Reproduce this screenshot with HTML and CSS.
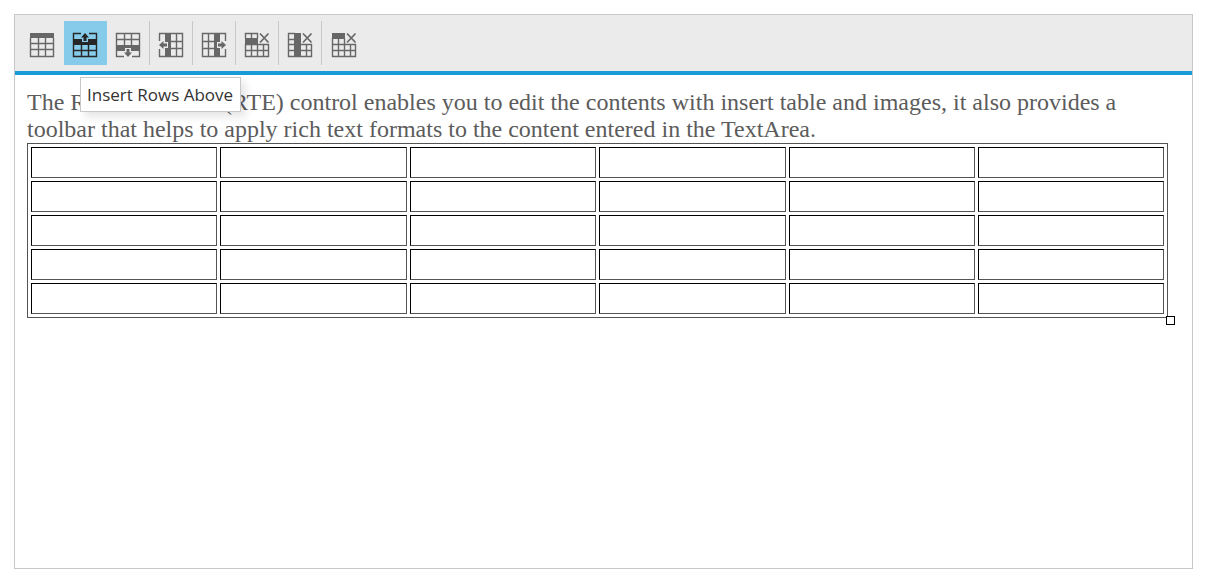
FILE: index.html
```html
<!DOCTYPE html>
<html lang="en">
<head>
<meta charset="utf-8">
<title>Rich Text Editor</title>
<link rel="stylesheet" href="styles.css">
</head>
<body>
<main class="editor">
  <div class="toolbar" role="toolbar" aria-label="Table tools">
    <button class="tool" type="button" aria-label="Table header">
      <svg class="icon" viewBox="0 0 24 24"><path class="fill" d="M0 0H24V5H0Z"/><path class="line" d="M.5 5V23.500H23.500V5M8.500 5V23M15.500 5V23M0 10.500H24M0 16.500H24"/></svg>
    </button>
    <button class="tool active" type="button" aria-label="Insert rows above" aria-describedby="tip">
      <svg class="icon" viewBox="0 0 24 24"><path class="line" d="M8 .5H.5V23.500H23.500V.5H16M8.500 11V23M15.500 11V23M0 17.500H24"/><path class="fill" d="M0 6H9V9H15V6H24V12H0ZM12 0L16 4.500H13.500V8H10.500V4.500H8Z"/></svg>
      <span class="tooltip" id="tip" role="tooltip">Insert Rows Above</span>
    </button>
    <button class="tool divided" type="button" aria-label="Insert rows below">
      <svg class="icon" viewBox="0 0 24 24"><path class="line" d="M8 23.500H.5V.5H23.500V23.500H16M8.500 0V13M15.500 0V13M0 6.500H24"/><path class="fill" d="M0 12H24V18H15V15H9V18H0ZM12 24L16 19.500H13.500V16H10.500V19.500H8Z"/></svg>
    </button>
    <button class="tool divided" type="button" aria-label="Insert columns left">
      <svg class="icon" viewBox="0 0 24 24"><path class="line" d="M.5 8V.5H23.500V23.500H.5V16M17.500 0V24M12 8.500H24M12 15.500H24"/><path class="fill" d="M6 0H12V24H6V15H9V9H6ZM0 12L4.500 8V10.500H8V13.500H4.500V16Z"/></svg>
    </button>
    <button class="tool divided" type="button" aria-label="Insert columns right">
      <svg class="icon" viewBox="0 0 24 24"><path class="line" d="M23.500 8V.5H.5V23.500H23.500V16M6.500 0V24M0 8.500H13M0 15.500H13"/><path class="fill" d="M12 0H18V9H15V15H18V24H12ZM24 12L19.500 8V10.500H16V13.500H19.500V16Z"/></svg>
    </button>
    <button class="tool divided" type="button" aria-label="Delete row">
      <svg class="icon" viewBox="0 0 24 24"><path class="fill" d="M0 5H13V12H0Z"/><path class="line" d="M.5 5V.5H12.500V5M6.500 0V5M.5 11.500H23.500V23.500H.5ZM6.500 11V24M12.500 11V24M18.500 11V24M0 17.500H24"/><path class="cross" d="M15 .5L23.500 9.500M23.500 .5L15 9.500"/></svg>
    </button>
    <button class="tool divided" type="button" aria-label="Delete column">
      <svg class="icon" viewBox="0 0 24 24"><path class="fill" d="M6 0H13V24H6Z"/><path class="line" d="M7 .5H.5V23.500H23.500V11.500H13M0 6.500H7M0 11.500H7M0 17.500H24M18.500 11V24"/><path class="cross" d="M15 .5L23.500 9.500M23.500 .5L15 9.500"/></svg>
    </button>
    <button class="tool" type="button" aria-label="Delete table">
      <svg class="icon" viewBox="0 0 24 24"><path class="fill" d="M0 0H13V6H0Z"/><path class="line" d="M.5 5V23.500H23.500V11.500H0M6.500 5V24M12.500 5V24M18.500 11V24M0 17.500H24"/><path class="cross" d="M15 .5L23.500 9.500M23.500 .5L15 9.500"/></svg>
    </button>
  </div>
  <div class="content">
    <p class="text">The RichTextEditor (RTE) control enables you to edit the contents with insert table and images, it also provides a toolbar that helps to apply rich text formats to the content entered in the TextArea.</p>
    <div class="table-wrap">
      <table class="grid">
        <tbody>
          <tr><td></td><td></td><td></td><td></td><td></td><td></td></tr>
          <tr><td></td><td></td><td></td><td></td><td></td><td></td></tr>
          <tr><td></td><td></td><td></td><td></td><td></td><td></td></tr>
          <tr><td></td><td></td><td></td><td></td><td></td><td></td></tr>
          <tr><td></td><td></td><td></td><td></td><td></td><td></td></tr>
        </tbody>
      </table>
      <span class="resize-handle"></span>
    </div>
  </div>
</main>
</body>
</html>
```
FILE: styles.css
```css
* {
  box-sizing: border-box;
}

body {
  margin: 0;
  padding: 14px 21px 13px 14px;
  background: #fff;
}

.editor {
  min-height: calc(100vh - 27px);
  border: 1px solid #c8c8c8;
}

.toolbar {
  display: flex;
  padding: 6px;
  background: #ebebeb;
  border-bottom: 4px solid #1a9ad7;
}

.tool {
  position: relative;
  display: flex;
  align-items: center;
  justify-content: center;
  width: 43px;
  height: 44px;
  padding: 3px 0 0;
  border: 0;
  border-right: 1px solid transparent;
  background: none;
  color: #676767;
}

.tool:last-child {
  width: 44px;
  border-right: 0;
}

.divided {
  border-right-color: #c8c8c8;
}

.active {
  border-right-color: #86cbea;
  background: #86cbea;
  color: #262626;
}

.icon {
  width: 24px;
  height: 24px;
  overflow: visible;
}

.fill {
  fill: currentColor;
}

.line {
  fill: none;
  stroke: currentColor;
  stroke-width: 1.4;
}

.cross {
  fill: none;
  stroke: currentColor;
  stroke-width: 1.7;
}

.tooltip {
  position: absolute;
  top: 56px;
  left: 16px;
  z-index: 1;
  padding: 4px 7px 4px 6px;
  border: 1px solid #c8c8c8;
  background: #fff;
  box-shadow: 5px 5px 8px rgba(0, 0, 0, 0.1);
  color: #333;
  font: 17px/25px "Open Sans", "Noto Sans", sans-serif;
  white-space: nowrap;
}

.content {
  padding: 14px 12px;
}

.text {
  margin: 0;
  color: #5c5c5c;
  font: 24px/27px "Liberation Serif", "Times New Roman", serif;
}

.table-wrap {
  position: relative;
  width: 99%;
}

.grid {
  width: 100%;
  table-layout: fixed;
  border: 1px solid #545454;
  border-collapse: separate;
  border-spacing: 3px;
}

.grid td {
  height: 31px;
  padding: 0;
  border: 1px solid;
  border-color: #000 #545454 #545454 #000;
}

.resize-handle {
  position: absolute;
  right: -7px;
  bottom: -7px;
  width: 9px;
  height: 9px;
  border: 1px solid #000;
  background: #fff;
}
```
